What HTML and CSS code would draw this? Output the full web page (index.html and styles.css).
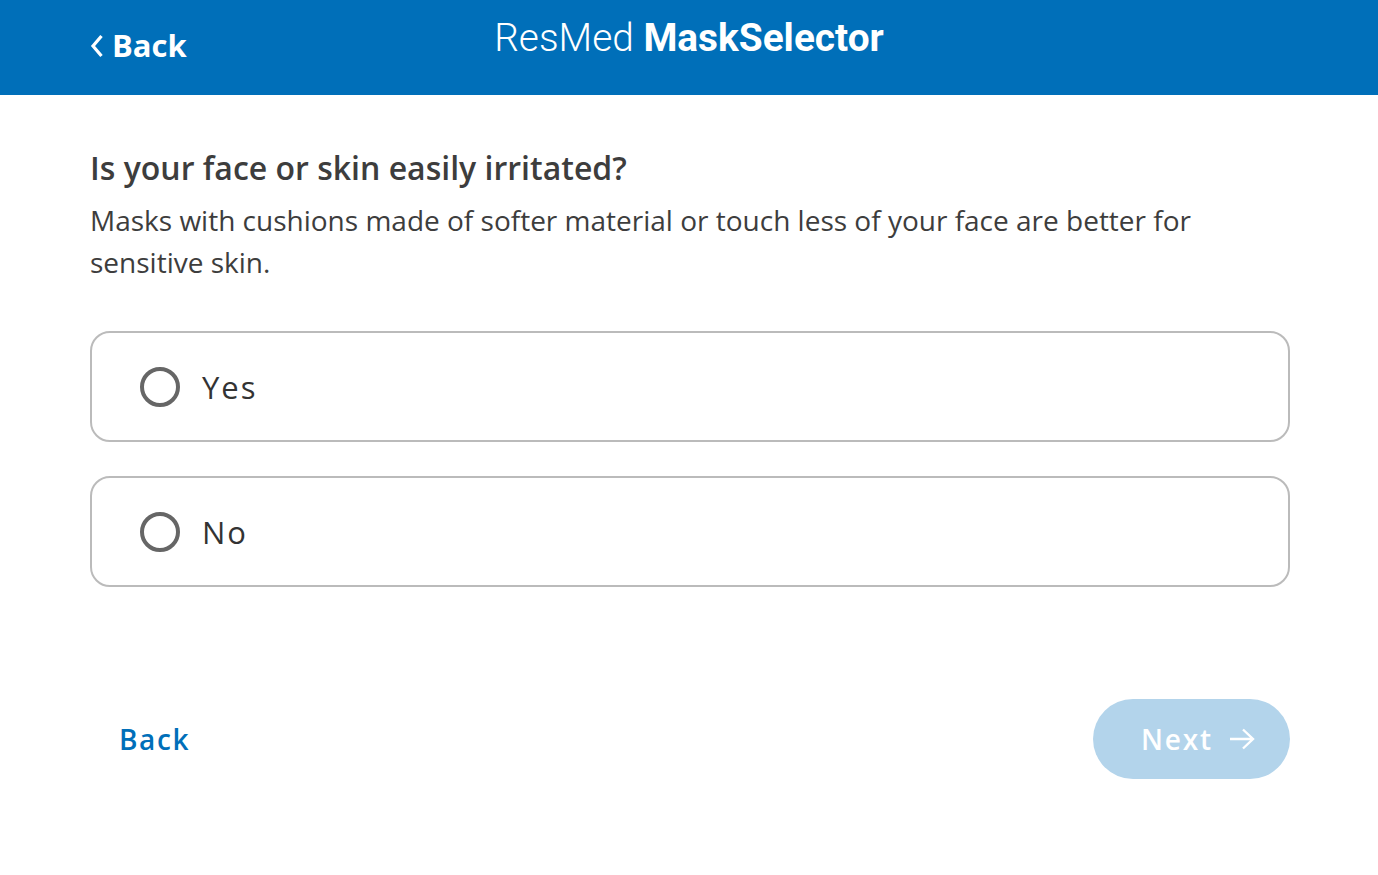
FILE: index.html
```html
<!DOCTYPE html>
<html>
<head>
<meta charset="utf-8">
<link rel="stylesheet" href="styles.css">
</head>
<body>
<header class="topbar">
  <a class="top-back" href="#">
    <svg class="chev" width="14" height="26" viewBox="0 0 14 26"><path d="M11.5 3 L3 13 L11.5 23" fill="none" stroke="#fff" stroke-width="3.2"/></svg>
    <span>Back</span>
  </a>
  <div class="brand"><span class="light">ResMed</span> <span class="bold">MaskSelector</span></div>
</header>
<main class="content">
  <h1 class="question">Is your face or skin easily irritated?</h1>
  <p class="desc">Masks with cushions made of softer material or touch less of your face are better for sensitive skin.</p>
  <div class="options">
    <label class="option"><span class="radio"></span><span class="opt-text">Yes</span></label>
    <label class="option"><span class="radio"></span><span class="opt-text">No</span></label>
  </div>
  <div class="nav">
    <a class="back-link" href="#">Back</a>
    <button class="next-btn">Next
      <svg width="28" height="24" viewBox="0 0 28 24"><path d="M2 12 H25 M15 2.5 L25 12 L15 21.5" fill="none" stroke="#fff" stroke-width="2.4"/></svg>
    </button>
  </div>
</main>
</body>
</html>
```
FILE: styles.css
```css
* { box-sizing: border-box; }
body {
  margin: 0;
  font-family: "Open Sans", "Noto Sans", sans-serif;
  background: #fff;
  color: #3d3d3d;
}
.topbar {
  height: 95px;
  background: #006fb9;
  position: relative;
  display: flex;
  align-items: flex-start;
  padding: 0 90px;
}
.top-back {
  display: flex;
  align-items: center;
  gap: 8px;
  color: #fff;
  text-decoration: none;
  font-weight: 700;
  font-size: 31px;
  margin-top: 25px;
  line-height: 40px;
}
.chev { margin-top: 2px; }
.brand {
  position: absolute;
  left: 0;
  right: 0;
  top: 14px;
  text-align: center;
  color: #fff;
  font-family: Roboto, "Liberation Sans", sans-serif;
  font-size: 38.8px;
  line-height: 48px;
  pointer-events: none;
}
.brand .light { font-weight: 300; }
.brand .bold { font-weight: 700; }
.content {
  width: 1200px;
  margin: 0 0 0 90px;
}
.question {
  margin: 49px 0 0;
  font-size: 32px;
  font-weight: 600;
  line-height: 48px;
  color: #3d3d3d;
}
.desc {
  margin: 7px 0 0;
  font-size: 28px;
  line-height: 42px;
  color: #3d3d3d;
}
.options {
  margin-top: 48px;
  display: flex;
  flex-direction: column;
  gap: 34px;
}
.option {
  height: 111px;
  border: 2px solid #bbbbbb;
  border-radius: 20px;
  display: flex;
  align-items: center;
  padding-left: 48px;
  gap: 22px;
}
.radio {
  width: 40px;
  height: 40px;
  border: 4px solid #666;
  border-radius: 50%;
  flex: none;
}
.opt-text {
  font-size: 31px;
  letter-spacing: 2px;
  color: #333;
}
.nav {
  margin-top: 112px;
  display: flex;
  justify-content: space-between;
  align-items: center;
}
.back-link {
  margin-left: 29px;
  color: #006fb9;
  text-decoration: none;
  font-size: 28px;
  font-weight: 600;
  letter-spacing: 1.6px;
}
.next-btn {
  width: 197px;
  height: 80px;
  border: none;
  border-radius: 40px;
  background: #b3d4eb;
  color: #fff;
  font-family: "Open Sans", sans-serif;
  font-size: 28px;
  font-weight: 600;
  letter-spacing: 1.8px;
  display: flex;
  align-items: center;
  justify-content: center;
  gap: 15px;
  padding: 0 0 0 14px;
}
```
